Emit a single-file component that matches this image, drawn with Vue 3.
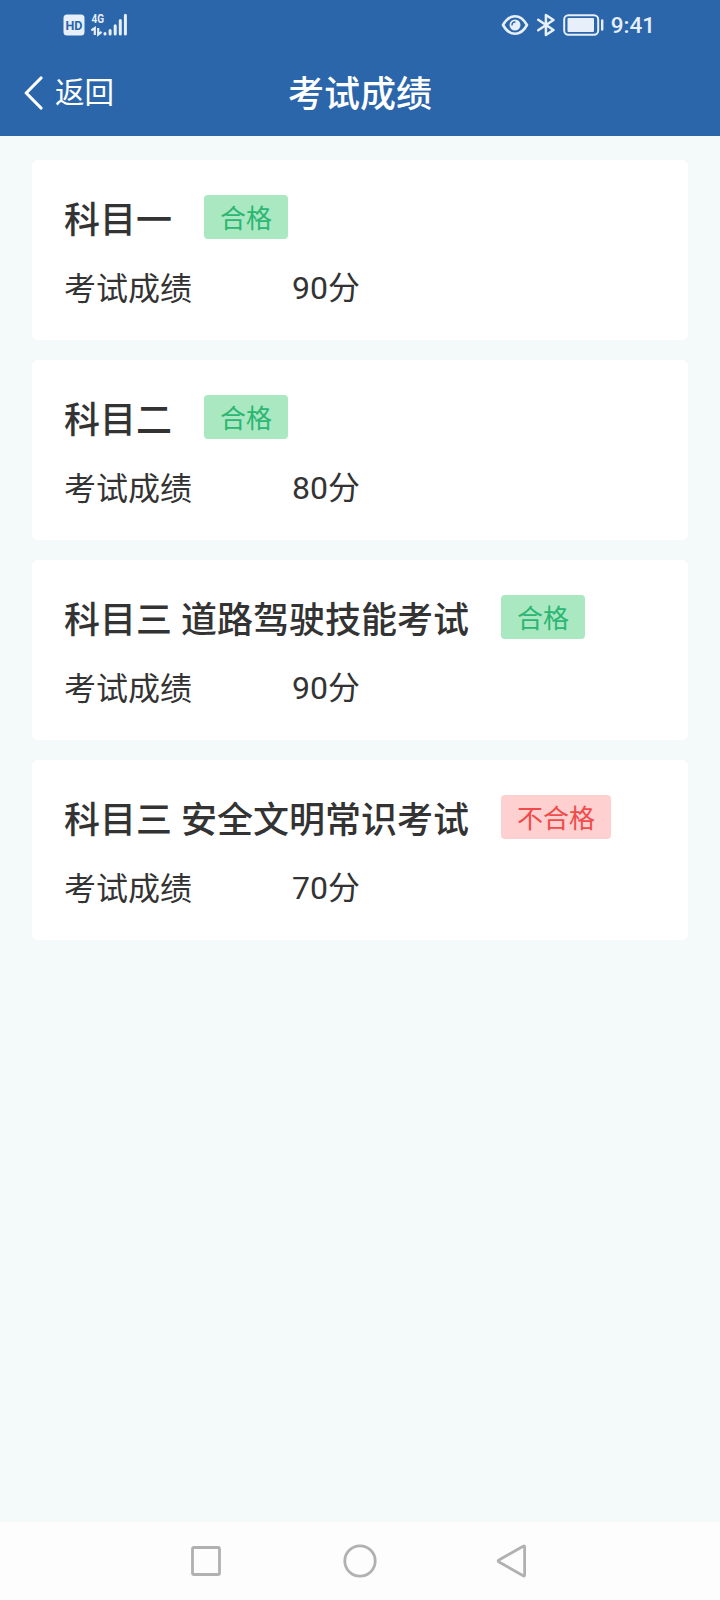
<template>
  <div class="page">
    <header class="header">
      <div class="status-bar">
        <div class="status-left">
          <svg class="hd-icon" viewBox="0 0 22 22">
            <rect x="0.5" y="0.5" width="21" height="21" rx="3.5" fill="#e6effa" />
            <text x="11" y="16" class="hd-text" textLength="17" lengthAdjust="spacingAndGlyphs">HD</text>
          </svg>
          <svg class="signal-icon" viewBox="0 0 38 30">
            <text x="0.5" y="12.2" class="net-text" textLength="12.5" lengthAdjust="spacingAndGlyphs">4G</text>
            <path d="M0.3 19.4L3.8 17V24M7.2 17V23.4L10.6 20.8" class="data-arrows" />
            <path d="M14 22.4v0.6M19.1 19.4v3.6M24.2 14.8v8.2M29.3 9.4v13.6M34.4 4.2v18.8" class="bars" />
          </svg>
        </div>
        <div class="status-right">
          <svg class="eye-icon" viewBox="0 0 28 24">
            <path d="M2 12C5.5 5.8 9.3 3.2 14 3.2S22.5 5.8 26 12C22.5 18.2 18.7 20.8 14 20.8S5.5 18.2 2 12Z" fill="none" stroke="#e6effa" stroke-width="2.6" stroke-linejoin="round" />
            <circle cx="14" cy="12" r="5.5" fill="#e6effa" />
            <path d="M11 12A3 3 0 0 1 14 9" fill="none" stroke="#2b65aa" stroke-width="1.3" stroke-linecap="round" />
          </svg>
          <svg class="bt-icon" viewBox="0 0 20 24">
            <path d="M2.2 6.8L17.5 17L9.9 22V2L17.5 7L2.2 17.2" fill="none" stroke="#e6effa" stroke-width="2.5" stroke-linejoin="round" stroke-linecap="round" />
          </svg>
          <svg class="battery-icon" viewBox="0 0 41 22">
            <rect x="1.2" y="1.2" width="34" height="19.6" rx="4.2" fill="none" stroke="#e6effa" stroke-width="2" />
            <rect x="4.5" y="4" width="26.5" height="14" rx="1" fill="#e6effa" />
            <path d="M39.2 6.5v9" stroke="#e6effa" stroke-width="2.4" stroke-linecap="round" />
          </svg>
          <span class="time">9:41</span>
        </div>
      </div>
      <div class="title-bar">
        <button class="back" type="button">
          <svg class="back-icon" viewBox="0 0 20 34">
            <path d="M17 2L2.2 17L17 32" fill="none" stroke="#fff" stroke-width="3.2" stroke-linecap="round" stroke-linejoin="round" />
          </svg>
          <span>返回</span>
        </button>
        <h1 class="title">考试成绩</h1>
      </div>
    </header>

    <main class="list">
      <section v-for="item in results" :key="item.name" class="card">
        <div class="card-head">
          <h2 class="name">{{ item.name }}</h2>
          <span class="tag" :class="item.passed ? 'pass' : 'fail'">{{ item.passed ? "合格" : "不合格" }}</span>
        </div>
        <div class="card-row">
          <span class="label">考试成绩</span>
          <span>{{ item.score }}分</span>
        </div>
      </section>
    </main>

    <!-- System navigation -->
    <footer class="nav-bar">
      <svg class="nav-icon" viewBox="0 0 36 36">
        <rect x="4.5" y="4.5" width="27" height="27" rx="1.5" />
      </svg>
      <svg class="nav-icon" viewBox="0 0 36 36">
        <circle cx="18" cy="18" r="15.2" />
      </svg>
      <svg class="nav-icon" viewBox="0 0 36 36">
        <path d="M27.2 3.2Q28.6 2.5 28.6 4V32Q28.6 33.5 27.2 32.7L3 19Q1.3 18 3 17Z" />
      </svg>
    </footer>
  </div>
</template>

<script setup>
import { ref } from "vue";

const results = ref([
  { name: "科目一", score: 90, passed: true },
  { name: "科目二", score: 80, passed: true },
  { name: "科目三 道路驾驶技能考试", score: 90, passed: true },
  { name: "科目三 安全文明常识考试", score: 70, passed: false },
]);
</script>

<style>
body {
  margin: 0;
}
</style>

<style scoped>
.page {
  display: flex;
  flex-direction: column;
  min-height: 1600px;
  background: #f4f9fa;
  color: #333;
  font-family: Roboto, "Noto Sans CJK SC", sans-serif;
}

svg {
  display: block;
  flex-shrink: 0;
}

.header {
  height: 136px;
  background: #2b65aa;
  color: #fff;
}

.status-bar {
  display: flex;
  justify-content: space-between;
  align-items: center;
  height: 49px;
  padding: 0 65px 0 63px;
}

.status-left,
.status-right {
  display: flex;
  align-items: center;
}

.hd-icon {
  width: 22px;
  height: 22px;
}

.hd-text {
  font-size: 13.5px;
  font-weight: 700;
  fill: #2b65aa;
  text-anchor: middle;
}

.signal-icon {
  width: 38px;
  height: 30px;
  margin: 2px 0 0 6px;
}

.net-text {
  font-size: 13.5px;
  font-weight: 700;
  fill: #e6effa;
}

.data-arrows {
  fill: none;
  stroke: #e6effa;
  stroke-width: 2.2;
}

.bars {
  fill: none;
  stroke: #e6effa;
  stroke-width: 3;
  stroke-linecap: round;
}

.eye-icon {
  width: 28px;
  height: 24px;
}

.bt-icon {
  width: 20px;
  height: 24px;
  margin-left: 7px;
}

.battery-icon {
  width: 41px;
  height: 22px;
  margin-left: 7px;
}

.time {
  margin-left: 7px;
  font-size: 22.5px;
  font-weight: 500;
  color: #e6effa;
}

.title-bar {
  display: grid;
  grid-template-columns: 1fr auto 1fr;
  align-items: center;
  height: 87px;
  padding: 0 24px;
}

.back {
  display: flex;
  align-items: center;
  gap: 11px;
  padding: 0;
  border: none;
  background: none;
  color: #fff;
  font-family: inherit;
  font-size: 29.5px;
  line-height: 44px;
}

.back-icon {
  width: 20px;
  height: 34px;
}

.title {
  margin: 0;
  padding-top: 5px;
  font-size: 36px;
  font-weight: 500;
  line-height: 52px;
}

.list {
  display: flex;
  flex: 1;
  flex-direction: column;
  gap: 20px;
  padding: 24px 32px;
}

.card {
  box-sizing: border-box;
  height: 180px;
  padding: 32px;
  border-radius: 6px;
  background: #fff;
}

.card-head {
  display: flex;
  align-items: center;
  gap: 32px;
  height: 50px;
}

.name {
  margin: 0;
  padding-top: 7px;
  font-size: 36px;
  font-weight: 500;
  line-height: 50px;
}

.tag {
  box-sizing: border-box;
  height: 44px;
  padding: 3px 16px 0;
  border-radius: 4px;
  font-size: 26px;
  line-height: 42px;
}

.pass {
  background: #a9e8c1;
  color: #2bb673;
}

.fail {
  background: #ffd0d0;
  color: #f04b4b;
}

.card-row {
  display: flex;
  gap: 100px;
  margin-top: 23px;
  font-size: 32px;
  line-height: 46px;
}

.label {
  padding-top: 1px;
}

.nav-bar {
  display: flex;
  justify-content: center;
  align-items: center;
  gap: 118px;
  height: 78px;
  background: #fdfdfd;
}

.nav-icon {
  width: 36px;
  height: 36px;
  fill: none;
  stroke: #b1b1b1;
  stroke-width: 2.8;
}
</style>
